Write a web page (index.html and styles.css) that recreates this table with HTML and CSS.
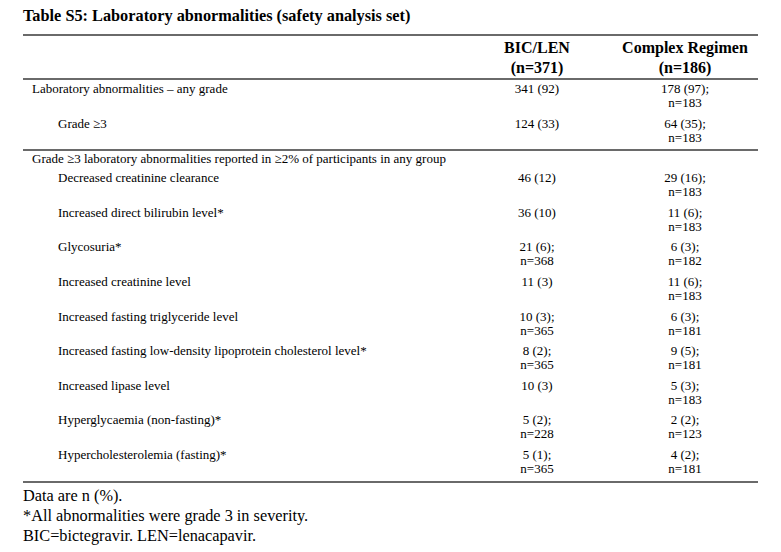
FILE: index.html
```html
<!DOCTYPE html>
<html lang="en">
<head>
<meta charset="utf-8">
<title>Table S5</title>
<link rel="stylesheet" href="styles.css">
</head>
<body>
<div class="page">
  <h1 class="title">Table S5: Laboratory abnormalities (safety analysis set)</h1>
  <table class="data">
    <colgroup>
      <col class="c-label">
      <col class="c-a">
      <col class="c-b">
    </colgroup>
    <thead>
      <tr class="head">
        <th></th>
        <th>BIC/LEN<br>(n=371)</th>
        <th>Complex Regimen<br>(n=186)</th>
      </tr>
    </thead>
    <tbody>
      <tr class="row">
        <td class="lab">Laboratory abnormalities – any grade</td>
        <td class="val">341 (92)</td>
        <td class="val">178 (97);<br>n=183</td>
      </tr>
      <tr class="row sep">
        <td class="lab ind">Grade ≥3</td>
        <td class="val">124 (33)</td>
        <td class="val">64 (35);<br>n=183</td>
      </tr>
      <tr class="sub">
        <td class="lab" colspan="3">Grade ≥3 laboratory abnormalities reported in ≥2% of participants in any group</td>
      </tr>
      <tr class="row">
        <td class="lab ind">Decreased creatinine clearance</td>
        <td class="val">46 (12)</td>
        <td class="val">29 (16);<br>n=183</td>
      </tr>
      <tr class="row">
        <td class="lab ind">Increased direct bilirubin level*</td>
        <td class="val">36 (10)</td>
        <td class="val">11 (6);<br>n=183</td>
      </tr>
      <tr class="row">
        <td class="lab ind">Glycosuria*</td>
        <td class="val">21 (6);<br>n=368</td>
        <td class="val">6 (3);<br>n=182</td>
      </tr>
      <tr class="row">
        <td class="lab ind">Increased creatinine level</td>
        <td class="val">11 (3)</td>
        <td class="val">11 (6);<br>n=183</td>
      </tr>
      <tr class="row">
        <td class="lab ind">Increased fasting triglyceride level</td>
        <td class="val">10 (3);<br>n=365</td>
        <td class="val">6 (3);<br>n=181</td>
      </tr>
      <tr class="row">
        <td class="lab ind">Increased fasting low-density lipoprotein cholesterol level*</td>
        <td class="val">8 (2);<br>n=365</td>
        <td class="val">9 (5);<br>n=181</td>
      </tr>
      <tr class="row">
        <td class="lab ind">Increased lipase level</td>
        <td class="val">10 (3)</td>
        <td class="val">5 (3);<br>n=183</td>
      </tr>
      <tr class="row">
        <td class="lab ind">Hyperglycaemia (non-fasting)*</td>
        <td class="val">5 (2);<br>n=228</td>
        <td class="val">2 (2);<br>n=123</td>
      </tr>
      <tr class="row sep">
        <td class="lab ind">Hypercholesterolemia (fasting)*</td>
        <td class="val">5 (1);<br>n=365</td>
        <td class="val">4 (2);<br>n=181</td>
      </tr>
    </tbody>
  </table>
  <div class="notes">
    <p>Data are n (%).</p>
    <p>*All abnormalities were grade 3 in severity.</p>
    <p>BIC=bictegravir. LEN=lenacapavir.</p>
  </div>
</div>
</body>
</html>
```

FILE: styles.css
```css
html, body {
  margin: 0;
  padding: 0;
  background: #ffffff;
}

body {
  font-family: "Liberation Serif", "Times New Roman", serif;
  color: #000000;
}

.page {
  padding: 6px 0 0 23px;
  width: 735px;
}

.title {
  margin: 0 0 8px 0;
  font-size: 16.3px;
  line-height: 20px;
  font-weight: bold;
}

.data {
  width: 735px;
  border-collapse: collapse;
  table-layout: fixed;
  border-top: 2px solid #6a6a6a;
}

.c-label { width: 439px; }
.c-a { width: 150px; }
.c-b { width: 146px; }

.head th {
  font-size: 16px;
  line-height: 20px;
  font-weight: bold;
  text-align: center;
  padding: 2px 0 0 0;
  vertical-align: bottom;
  border-bottom: 2px solid #6a6a6a;
}

.row td {
  font-size: 13px;
  line-height: 14px;
  padding: 2px 0 4.6px 0;
  vertical-align: top;
}

.row.sep td {
  border-bottom: 2px solid #6a6a6a;
}

.sub td {
  font-size: 13px;
  line-height: 14px;
  padding: 1px 0 3px 9px;
}

.lab {
  padding-left: 9px !important;
  text-align: left;
}

.lab.ind {
  padding-left: 35px !important;
}

.val {
  text-align: center;
}

.notes {
  padding-top: 3px;
}

.notes p {
  margin: 0;
  font-size: 16.3px;
  line-height: 20px;
}
```
